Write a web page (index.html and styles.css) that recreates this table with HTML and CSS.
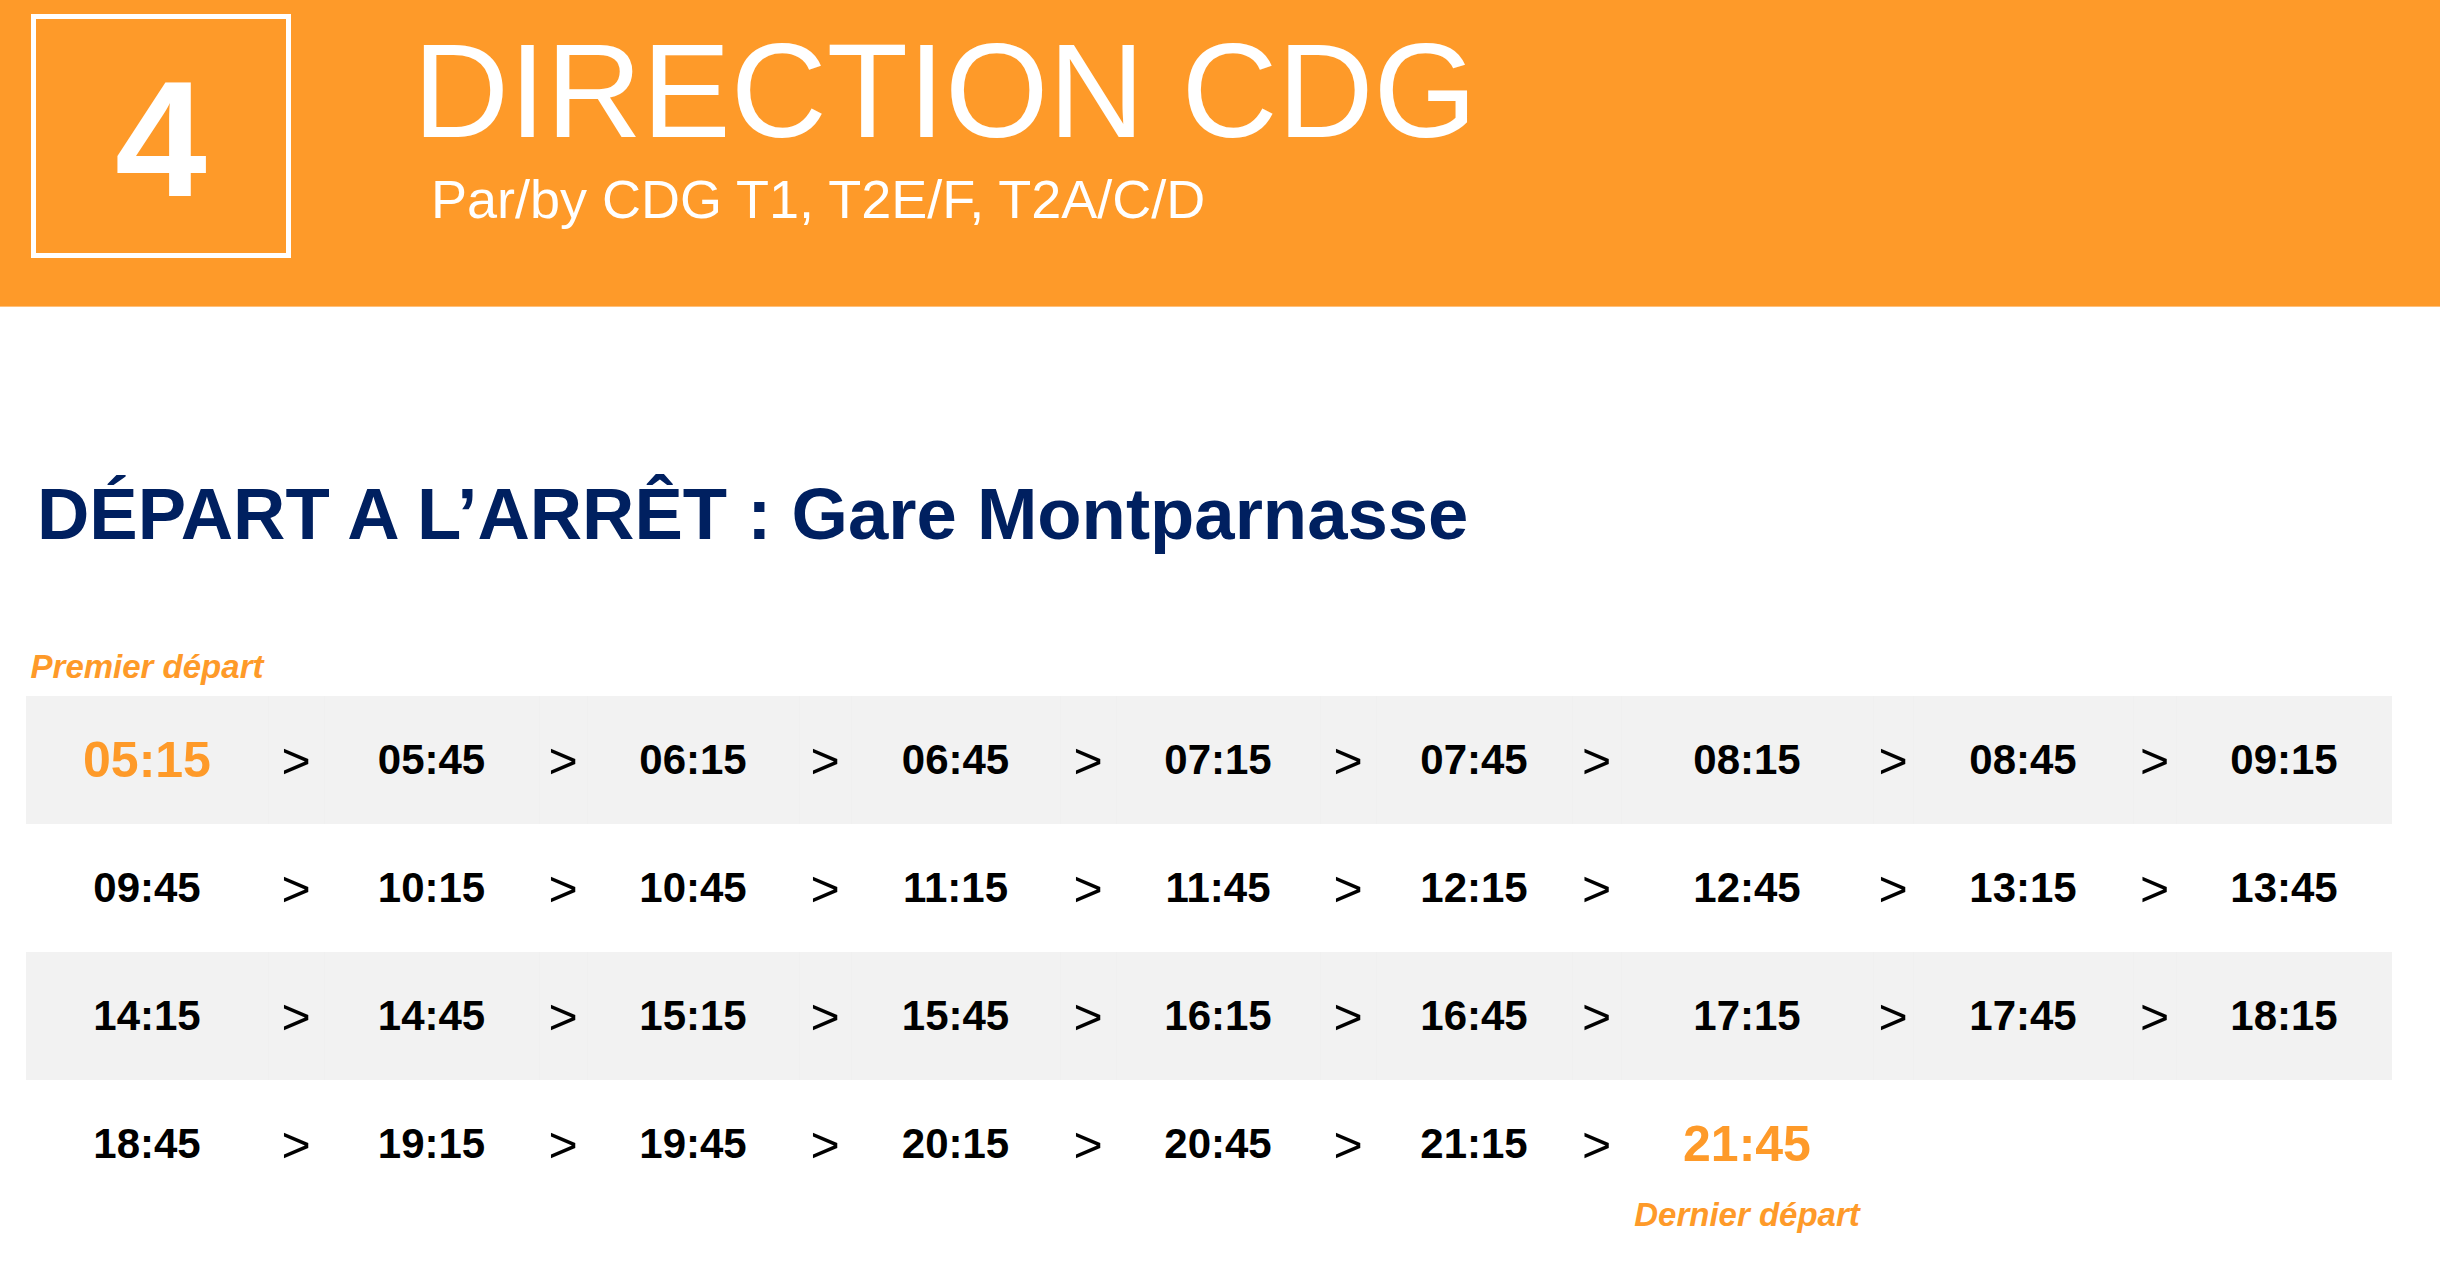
FILE: index.html
```html
<!DOCTYPE html>
<html lang="fr">
<head>
<meta charset="utf-8">
<title>Direction CDG – Gare Montparnasse</title>
<link rel="stylesheet" href="styles.css">
</head>
<body>
<header class="banner">
  <div class="line-box"><span class="line-num">4</span></div>
  <div class="banner-text">
    <h1 class="direction">DIRECTION CDG</h1>
    <p class="via">Par/by CDG T1, T2E/F, T2A/C/D</p>
  </div>
</header>

<main class="content">
  <h2 class="stop">DÉPART A L’ARRÊT : Gare Montparnasse</h2>

  <div class="grid labels-top">
    <span class="label">Premier départ</span>
  </div>

  <div class="grid row alt">
    <span class="cell time first">05:15</span><span class="cell arrow">&gt;</span>
    <span class="cell time">05:45</span><span class="cell arrow">&gt;</span>
    <span class="cell time">06:15</span><span class="cell arrow">&gt;</span>
    <span class="cell time">06:45</span><span class="cell arrow">&gt;</span>
    <span class="cell time">07:15</span><span class="cell arrow">&gt;</span>
    <span class="cell time">07:45</span><span class="cell arrow">&gt;</span>
    <span class="cell time">08:15</span><span class="cell arrow">&gt;</span>
    <span class="cell time">08:45</span><span class="cell arrow">&gt;</span>
    <span class="cell time">09:15</span>
  </div>

  <div class="grid row">
    <span class="cell time">09:45</span><span class="cell arrow">&gt;</span>
    <span class="cell time">10:15</span><span class="cell arrow">&gt;</span>
    <span class="cell time">10:45</span><span class="cell arrow">&gt;</span>
    <span class="cell time">11:15</span><span class="cell arrow">&gt;</span>
    <span class="cell time">11:45</span><span class="cell arrow">&gt;</span>
    <span class="cell time">12:15</span><span class="cell arrow">&gt;</span>
    <span class="cell time">12:45</span><span class="cell arrow">&gt;</span>
    <span class="cell time">13:15</span><span class="cell arrow">&gt;</span>
    <span class="cell time">13:45</span>
  </div>

  <div class="grid row alt">
    <span class="cell time">14:15</span><span class="cell arrow">&gt;</span>
    <span class="cell time">14:45</span><span class="cell arrow">&gt;</span>
    <span class="cell time">15:15</span><span class="cell arrow">&gt;</span>
    <span class="cell time">15:45</span><span class="cell arrow">&gt;</span>
    <span class="cell time">16:15</span><span class="cell arrow">&gt;</span>
    <span class="cell time">16:45</span><span class="cell arrow">&gt;</span>
    <span class="cell time">17:15</span><span class="cell arrow">&gt;</span>
    <span class="cell time">17:45</span><span class="cell arrow">&gt;</span>
    <span class="cell time">18:15</span>
  </div>

  <div class="grid row">
    <span class="cell time">18:45</span><span class="cell arrow">&gt;</span>
    <span class="cell time">19:15</span><span class="cell arrow">&gt;</span>
    <span class="cell time">19:45</span><span class="cell arrow">&gt;</span>
    <span class="cell time">20:15</span><span class="cell arrow">&gt;</span>
    <span class="cell time">20:45</span><span class="cell arrow">&gt;</span>
    <span class="cell time">21:15</span><span class="cell arrow">&gt;</span>
    <span class="cell time last">21:45</span>
  </div>

  <div class="grid labels-bottom">
    <span class="label label-last">Dernier départ</span>
  </div>
</main>
</body>
</html>
```

FILE: styles.css
```css
* {
  box-sizing: border-box;
}

html, body {
  margin: 0;
  padding: 0;
  background: #ffffff;
}

body {
  width: 2440px;
  height: 1270px;
  overflow: hidden;
  font-family: "Liberation Sans", Arial, sans-serif;
}

/* ---------- Banner ---------- */
.banner {
  height: 307px;
  background: #fe9a29;
  border-bottom: 1px solid #ffc07a;
  display: flex;
  align-items: flex-start;
  padding-left: 31px;
  color: #ffffff;
}

.line-box {
  margin-top: 14px;
  width: 260px;
  height: 244px;
  border: 5px solid #ffffff;
  display: flex;
  align-items: center;
  justify-content: center;
}

.line-num {
  font-weight: 700;
  font-size: 165px;
  line-height: 165px;
  margin-top: 6px;
}

.banner-text {
  margin-left: 122px;
  padding-top: 25px;
}

.direction {
  margin: 0;
  font-weight: 400;
  font-size: 133px;
  line-height: 133px;
  white-space: nowrap;
}

.via {
  margin: 14px 0 0 18px;
  font-size: 54px;
  line-height: 54px;
  white-space: nowrap;
}

/* ---------- Content ---------- */
.content {
  padding-left: 26px;
}

.stop {
  margin: 171px 0 0 11px;
  font-weight: 700;
  font-size: 72.5px;
  line-height: 72px;
  color: #002060;
  white-space: nowrap;
}

.grid {
  display: grid;
  grid-template-columns: 242px 56px 215px 48px 212px 52px 209px 56px 204px 56px 196px 49px 252px 40px 220px 43px 216px;
  width: 2366px;
}

.labels-top {
  margin-top: 100px;
  height: 46px;
}

.labels-bottom {
  margin-top: -10px;
}

.label {
  font-weight: 700;
  font-style: italic;
  font-size: 33px;
  line-height: 33px;
  color: #fe9a29;
  text-align: center;
  white-space: nowrap;
}

.label-last {
  grid-column: 13;
}

.row {
  height: 128px;
  align-items: center;
}

.row.alt {
  background: #f2f2f2;
}

.cell {
  height: 128px;
  display: flex;
  align-items: center;
  justify-content: center;
  font-weight: 700;
  color: #000000;
  white-space: nowrap;
}

.row.alt .cell + .cell {
  box-shadow: inset 1px 0 0 #f0f0f0;
}

.time {
  font-size: 42px;
  line-height: 42px;
}

.arrow {
  font-weight: 400;
  font-size: 50px;
  line-height: 50px;
  padding-top: 2px;
}

.time.first,
.time.last {
  font-size: 50px;
  line-height: 50px;
  color: #fe9a29;
}
```
